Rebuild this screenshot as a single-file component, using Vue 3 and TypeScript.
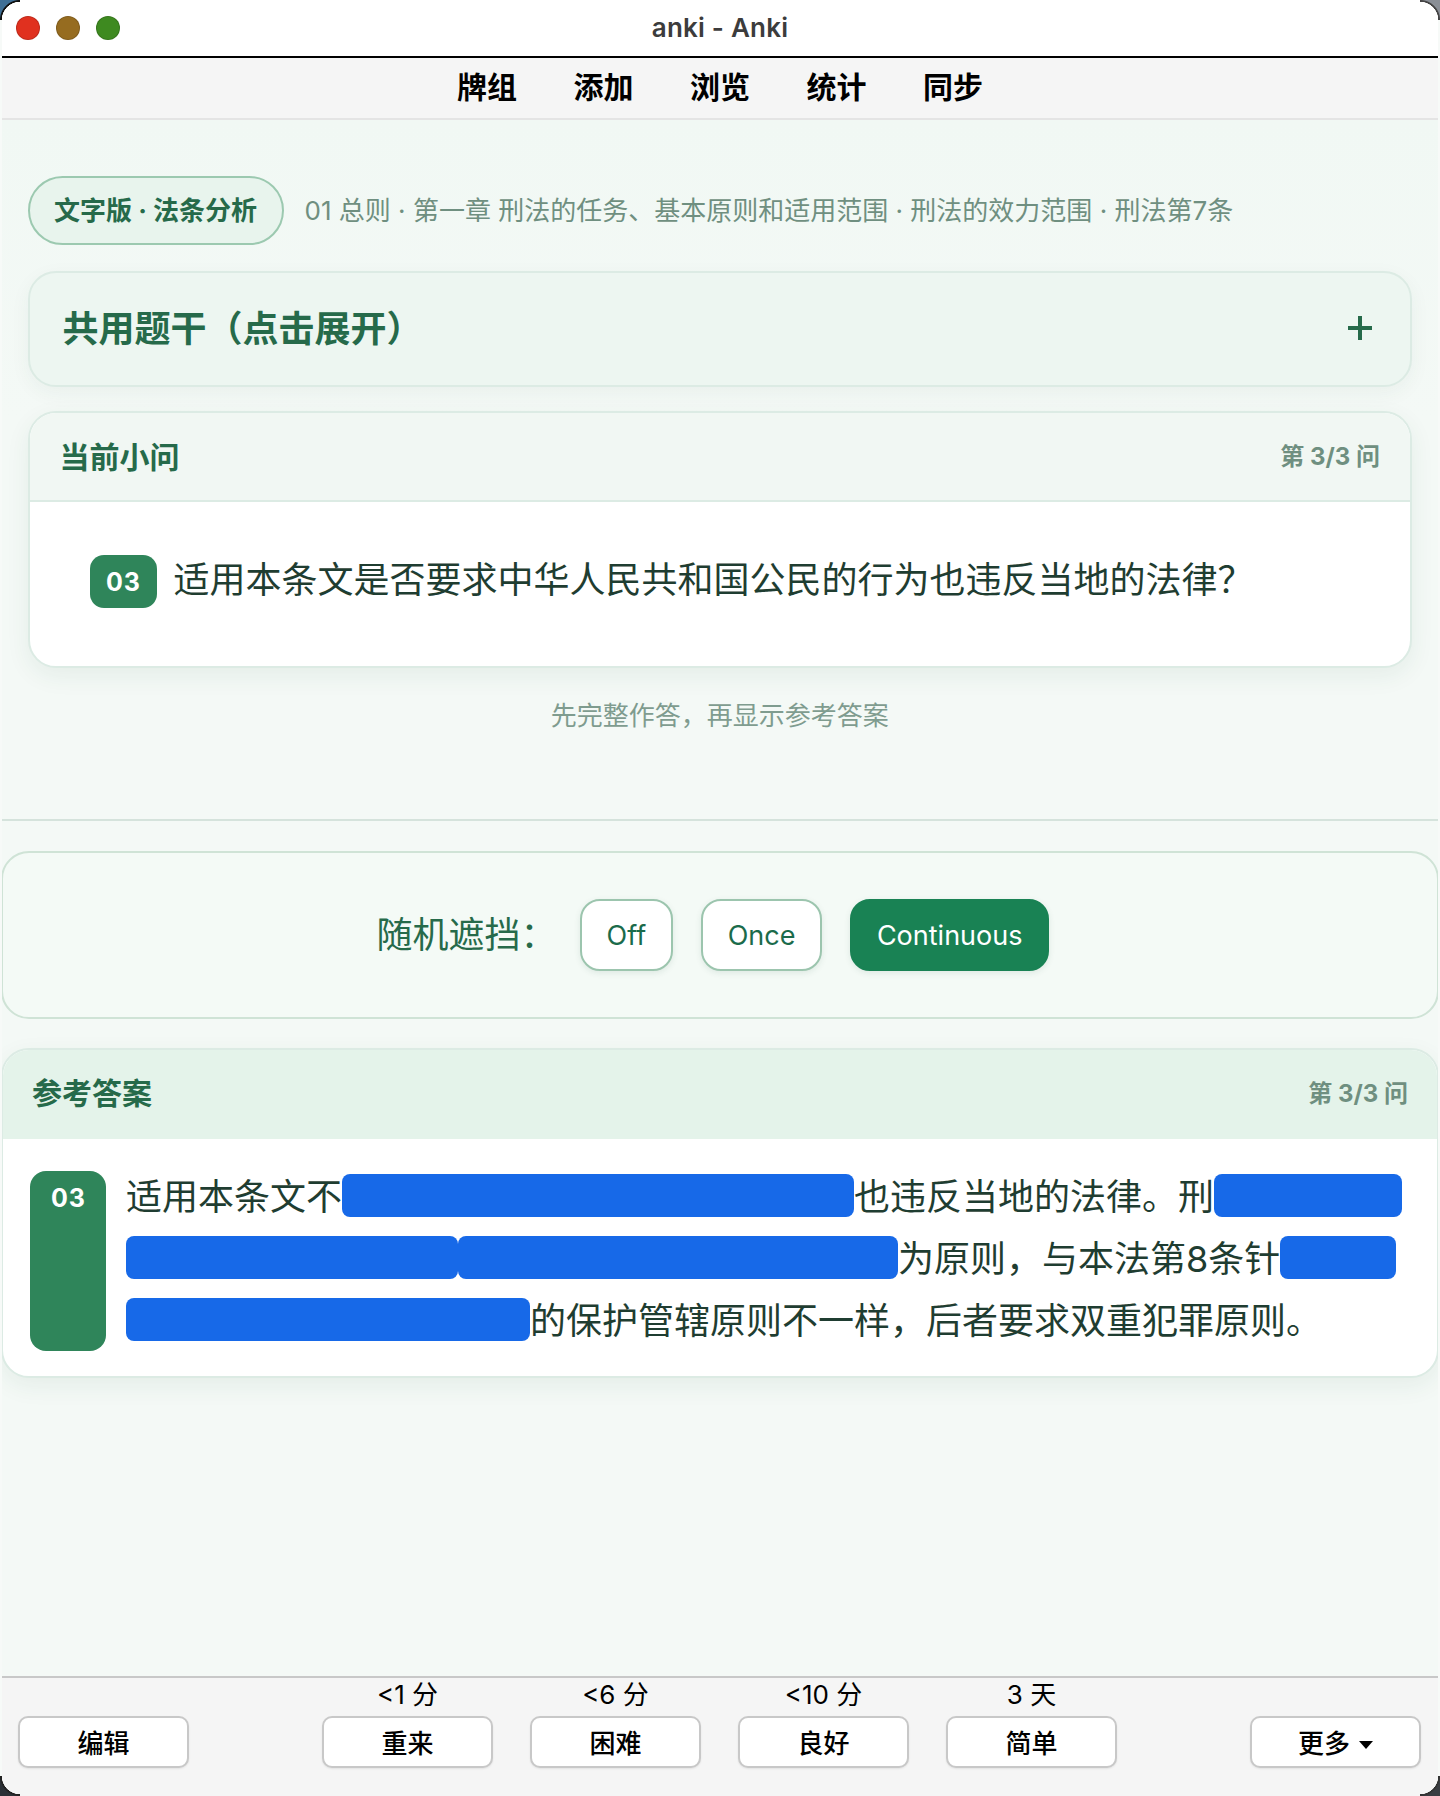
<script setup lang="ts">
interface Seg { text?: string; mask?: number }
const navItems: string[] = ['牌组', '添加', '浏览', '统计', '同步']
const coverModes = [
  { label: 'Off', active: false },
  { label: 'Once', active: false },
  { label: 'Continuous', active: true },
]
const answerLines: Seg[][] = [
  [{ text: '适用本条文不' }, { mask: 512 }, { text: '也违反当地的法律。刑' }, { mask: 188 }],
  [{ mask: 332 }, { mask: 440 }, { text: '为原则，与本法第8条针' }, { mask: 116 }],
  [{ mask: 404 }, { text: '的保护管辖原则不一样，后者要求双重犯罪原则。' }],
]
const ratings = [
  { time: '<1 分', label: '重来' },
  { time: '<6 分', label: '困难' },
  { time: '<10 分', label: '良好' },
  { time: '3 天', label: '简单' },
]
</script>

<template>
  <div class="page">
    <div class="window">
      <header class="titlebar">
        <div class="lights">
          <span class="light red"></span>
          <span class="light amber"></span>
          <span class="light green"></span>
        </div>
        <span class="title">anki - Anki</span>
      </header>
      <nav class="toolbar">
        <span v-for="item in navItems" :key="item" class="nav-item">{{ item }}</span>
      </nav>
      <main class="content">
        <section class="upper">
          <div class="meta">
            <span class="pill"><span class="lift">文字版 · 法条分析</span></span>
            <span class="crumb lift">01 总则 · 第一章 刑法的任务、基本原则和适用范围 · 刑法的效力范围 · 刑法第7条</span>
          </div>
          <div class="stem">
            <span class="stem-title">共用题干（点击展开）</span>
            <svg class="plus" viewBox="0 0 24 24" width="24" height="24" aria-hidden="true">
              <path d="M12 0v24M0 12h24" fill="none" stroke="#266a4a" stroke-width="4" />
            </svg>
          </div>
          <div class="qcard">
            <div class="qhead">
              <span class="qhead-title">当前小问</span>
              <span class="count">第 3/3 问</span>
            </div>
            <div class="qbody">
              <span class="qbadge">03</span>
              <span class="qtext">适用本条文是否要求中华人民共和国公民的行为也违反当地的法律？</span>
            </div>
          </div>
          <p class="hint">先完整作答，再显示参考答案</p>
        </section>

        <section class="cover">
          <span class="cover-label">随机遮挡：</span>
          <button
            v-for="m in coverModes"
            :key="m.label"
            class="mode"
            :class="{ active: m.active }"
            type="button"
          >{{ m.label }}</button>
        </section>

        <section class="answer">
          <div class="ahead">
            <span class="ahead-title">参考答案</span>
            <span class="count">第 3/3 问</span>
          </div>
          <div class="abody">
            <span class="abadge">03</span>
            <div class="alines">
              <div v-for="(line, i) in answerLines" :key="i" class="aline">
                <template v-for="(seg, j) in line" :key="j">
                  <span v-if="seg.mask" class="mask" :style="{ width: seg.mask + 'px' }"></span>
                  <span v-else class="atext">{{ seg.text }}</span>
                </template>
              </div>
            </div>
          </div>
        </section>
      </main>
      <footer class="bottom">
        <div class="slot"><span class="time">&nbsp;</span><button class="btn" type="button">编辑</button></div>
        <div class="rates">
          <div v-for="r in ratings" :key="r.label" class="slot">
            <span class="time">{{ r.time }}</span>
            <button class="btn" type="button">{{ r.label }}</button>
          </div>
        </div>
        <div class="slot">
          <span class="time">&nbsp;</span>
          <button class="btn" type="button">更多 <i class="caret"></i></button>
        </div>
      </footer>
    </div>
    <span class="corner tl"></span>
    <span class="corner tr"></span>
    <span class="corner bl"></span>
    <span class="corner br"></span>
  </div>
</template>

<style>
html, body { margin: 0; background: #fff; }
</style>

<style scoped>
.page {
  position: relative;
  width: 1440px;
  height: 1796px;
  overflow: hidden;
  background: #f7faf8;
  font-family: Inter, "Noto Sans CJK SC", sans-serif;
  color: #1f3d31;
}
.corner { position: absolute; width: 20px; height: 20px; }
.tl { left: 0; top: 0; background: radial-gradient(circle at 100% 100%, transparent 18px, #111 18.5px, #111 19.5px, #3f6f96 20.5px); }
.tr { right: 0; top: 0; background: radial-gradient(circle at 0 100%, transparent 18px, #444 18.5px, #444 19.5px, #8a8f96 20.5px); }
.bl { left: 0; bottom: 0; background: radial-gradient(circle at 100% 0, transparent 18px, #222 18.5px, #222 19.5px, #2b3036 20.5px); }
.br { right: 0; bottom: 0; background: radial-gradient(circle at 0 0, transparent 18px, #333 18.5px, #333 19.5px, #3a3d42 20.5px); }
.lift { position: relative; top: -2px; }
.window {
  position: relative;
  box-sizing: border-box;
  margin: 0 2px;
  width: 1436px;
  height: 1796px;
  overflow: hidden;
  display: flex;
  flex-direction: column;
  background: #f4f9f6;
}
.titlebar {
  box-sizing: border-box;
  height: 58px;
  flex: none;
  background: #fff;
  border-bottom: 2px solid #000;
  display: flex;
  align-items: center;
  justify-content: center;
  position: relative;
}
.lights { position: absolute; left: 14px; top: 16px; display: flex; gap: 16px; }
.light { width: 24px; height: 24px; border-radius: 50%; box-sizing: border-box; border: 1px solid rgba(0,0,0,.15); }
.red { background: #e0311f; }
.amber { background: #966c20; }
.green { background: #3e8a20; }
.title { font-size: 26px; font-weight: 600; color: #3c3c3c; letter-spacing: .2px; margin-top: -2px; }
.toolbar {
  box-sizing: border-box;
  height: 62px;
  flex: none;
  background: #f5f5f5;
  border-bottom: 2px solid #e4e4e4;
  display: flex;
  justify-content: center;
  align-items: center;
  gap: 56.5px;
}
.nav-item { font-size: 30px; font-weight: 700; color: #000; line-height: 1; margin-top: -2px; }
.content {
  flex: 1;
  min-height: 0;
  display: flex;
  flex-direction: column;
  background: linear-gradient(#f1f8f4, #f4f9f6 300px);
}
.upper {
  box-sizing: border-box;
  height: 701px;
  flex: none;
  padding: 56px 26px 0 25.5px;
  border-bottom: 2px solid #d5e3dc;
}
.meta { display: flex; align-items: center; gap: 21px; height: 69px; }
.pill {
  box-sizing: border-box;
  height: 69px;
  width: 256px;
  display: flex;
  align-items: center;
  justify-content: center;
  border: 2px solid #9cc9b0;
  border-radius: 35px;
  background: #e8f4ed;
  color: #266a4a;
  font-size: 26px;
  font-weight: 700;
  white-space: nowrap;
}
.crumb { font-size: 26px; color: #6f8f80; white-space: nowrap; }
.stem {
  box-sizing: border-box;
  margin-top: 26px;
  height: 116px;
  display: flex;
  align-items: center;
  justify-content: space-between;
  padding: 0 38px 0 33px;
  background: #edf6f1;
  border: 2px solid #dcebe4;
  border-radius: 28px;
  box-shadow: 0 6px 20px rgba(30, 80, 60, .05);
}
.stem-title { font-size: 36px; font-weight: 700; color: #266a4a; white-space: nowrap; position: relative; top: -3px; }
.plus { display: block; margin-top: -2px; }
.qcard {
  box-sizing: border-box;
  margin-top: 24px;
  height: 257px;
  background: #fff;
  border: 2px solid #dcebe4;
  border-radius: 28px;
  box-shadow: 0 8px 24px rgba(30, 80, 60, .07);
}
.qhead {
  box-sizing: border-box;
  height: 89px;
  display: flex;
  align-items: center;
  justify-content: space-between;
  padding: 0 30px 0 30px;
  background: #f1f7f3;
  border-bottom: 2px solid #dcebe4;
  border-radius: 26px 26px 0 0;
}
.qhead-title, .ahead-title { font-size: 30px; font-weight: 700; color: #266a4a; position: relative; top: -2px; }
.ahead .ahead-title { top: -4px; }
.count { font-size: 24px; font-weight: 700; color: #6f8f80; position: relative; top: -2px; }
.ahead .count { top: -3px; }
.qbody {
  display: flex;
  align-items: center;
  gap: 17px;
  padding: 53px 60px 0;
}
.qbadge {
  width: 67px;
  height: 53px;
  flex: none;
  box-sizing: border-box;
  padding-left: 1px;
  border-radius: 14px;
  background: #2f855a;
  color: #fff;
  font-size: 25px;
  font-weight: 700;
  letter-spacing: 1px;
  display: flex;
  align-items: center;
  justify-content: center;
}
.qtext { font-size: 36px; line-height: 1.2; white-space: nowrap; color: #1f3d31; position: relative; top: -1px; }
.hint {
  margin: 30px 0 0;
  line-height: 36px;
  text-align: center;
  font-size: 26px;
  color: #7f9c8f;
}
.cover {
  box-sizing: border-box;
  margin: 30px -1px 0;
  height: 168px;
  flex: none;
  display: flex;
  align-items: center;
  justify-content: center;
  gap: 28.5px;
  padding: 0 14.5px 0 0;
  background: #f4faf6;
  border: 2px solid #cfe3d6;
  border-radius: 28px;
}
.cover-label { font-size: 36px; color: #266a4a; margin-right: -5px; margin-top: -6px; white-space: nowrap; }
.mode {
  box-sizing: border-box;
  height: 72px;
  min-width: 92px;
  padding: 0 24.5px;
  font-family: inherit;
  font-size: 27px;
  color: #1b6b4b;
  background: #fff;
  border: 2px solid #9cc5ae;
  border-radius: 20px;
  box-shadow: 0 2px 6px rgba(30, 80, 60, .1);
}
.mode.active { background: #198254; border-color: #198254; color: #fff; }
.answer {
  box-sizing: border-box;
  margin: 29px -1px 0;
  height: 330px;
  flex: none;
  background: #fff;
  border: 2px solid #dcebe4;
  border-radius: 28px;
  overflow: hidden;
  box-shadow: 0 8px 24px rgba(30, 80, 60, .07);
}
.ahead {
  box-sizing: border-box;
  height: 89px;
  display: flex;
  align-items: center;
  justify-content: space-between;
  padding: 0 29px 0 29px;
  background: #e4f3ea;
}
.abody {
  display: flex;
  gap: 20px;
  padding: 32px 26px 0 27px;
}
.abadge {
  width: 76px;
  flex: none;
  box-sizing: border-box;
  padding-top: 9px;
  padding-left: 1px;
  text-align: center;
  background: #2f855a;
  color: #fff;
  border-radius: 16px;
  font-size: 25px;
  font-weight: 700;
  letter-spacing: 1px;
  line-height: 36px;
}
.alines { margin-top: -6.5px; }
.aline {
  height: 62px;
  display: flex;
  align-items: center;
  font-size: 36px;
  white-space: nowrap;
  color: #1f3d31;
}
.atext { position: relative; top: -2px; }
.mask {
  display: inline-block;
  height: 43px;
  border-radius: 8px;
  background: #1769e8;
}
.bottom {
  box-sizing: border-box;
  height: 120px;
  flex: none;
  background: #f5f5f5;
  border-top: 2px solid #c8c8c8;
  padding: 0 17px 0 16px;
  display: flex;
  justify-content: space-between;
}
.rates { display: flex; gap: 37px; }
.slot { display: flex; flex-direction: column; align-items: center; }
.time { height: 38px; line-height: 33px; font-size: 26px; color: #000; white-space: nowrap; }
.btn {
  box-sizing: border-box;
  width: 171px;
  height: 52px;
  font-family: inherit;
  font-size: 26px;
  font-weight: 500;
  line-height: 44px;
  color: #000;
  background: #fff;
  border: 2px solid #c8c8c8;
  border-radius: 10px;
  box-shadow: 0 1px 2px rgba(0, 0, 0, .08);
  padding: 3px 0 0;
}
.caret {
  display: inline-block;
  width: 0;
  height: 0;
  margin-left: 2px;
  vertical-align: middle;
  border-left: 7.5px solid transparent;
  border-right: 7.5px solid transparent;
  border-top: 8px solid #000;
}
</style>
